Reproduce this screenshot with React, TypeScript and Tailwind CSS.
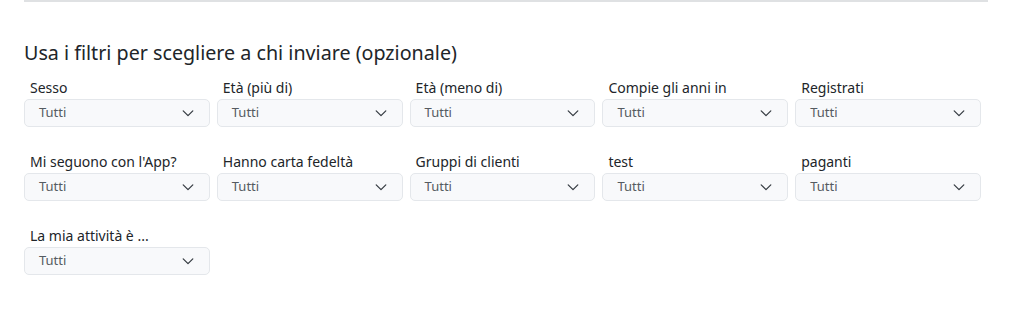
const filters = [
  'Sesso',
  'Età (più di)',
  'Età (meno di)',
  'Compie gli anni in',
  'Registrati',
  "Mi seguono con l'App?",
  'Hanno carta fedeltà',
  'Gruppi di clienti',
  'test',
  'paganti',
  'La mia attività è ...',
]

function Chevron() {
  return (
    <svg width="14" height="14" viewBox="0 0 16 16" fill="none" className="text-[#343a40]">
      <path d="M2.5 5.5l5.5 5.5 5.5-5.5" stroke="currentColor" strokeWidth="1.4" strokeLinecap="round" strokeLinejoin="round" />
    </svg>
  )
}

function FilterSelect({ label }: { label: string }) {
  return (
    <div className="pr-[7px] mb-[25px]">
      <div className="ml-[6px] mb-[1px] text-[14px] leading-[20px] text-[#212529]">{label}</div>
      <div className="h-[28px] flex items-center justify-between pl-[14px] pr-[14px] bg-[#f8f9fb] border border-[#e4e7eb] rounded-[5px]">
        <span className="text-[13px] text-[#555b61]">Tutti</span>
        <Chevron />
      </div>
    </div>
  )
}

export default function App() {
  return (
    <div className="w-[1024px] h-[318px] bg-white px-[24px] font-['Noto_Sans',sans-serif]">
      <div className="w-[964px] h-[2px] bg-[#dfe1e3]" />
      <h2 className="mt-[37px] mb-[11px] text-[19.7px] leading-[28px] text-[#212529]">
        Usa i filtri per scegliere a chi inviare (opzionale)
      </h2>
      <div className="w-[964px] grid grid-cols-5">
        {filters.map((f) => (
          <FilterSelect key={f} label={f} />
        ))}
      </div>
    </div>
  )
}
